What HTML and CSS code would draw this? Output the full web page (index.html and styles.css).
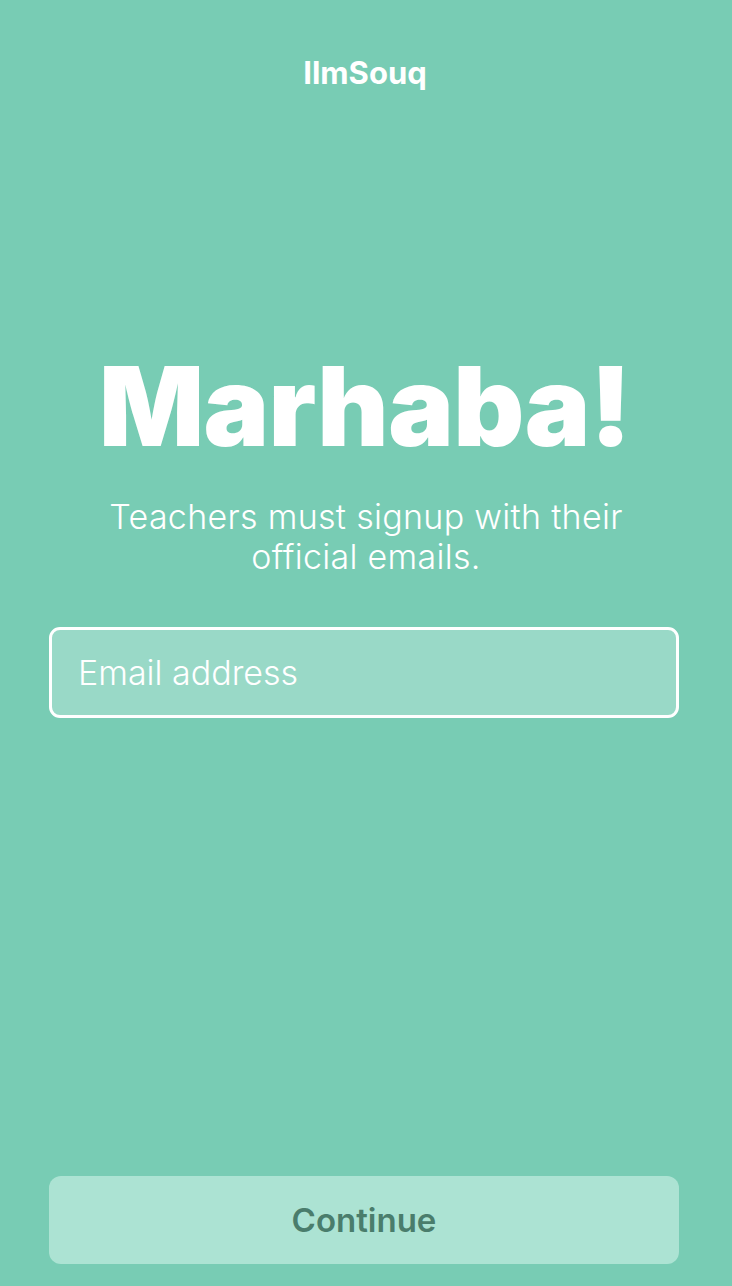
FILE: index.html
```html
<!DOCTYPE html>
<html lang="en">
<head>
<meta charset="utf-8">
<title>IlmSouq</title>
<link rel="stylesheet" href="styles.css">
</head>
<body>
<div class="screen">
  <header class="topbar">IlmSouq</header>
  <main class="content">
    <h1 class="hero">Marhaba!</h1>
    <p class="lead">Teachers must signup with their official emails.</p>
    <div class="field"><span class="placeholder">Email address</span></div>
  </main>
  <footer class="actions">
    <button class="continue" type="button">Continue</button>
  </footer>
</div>
</body>
</html>
```

FILE: styles.css
```css
* { box-sizing: border-box; }
html, body { margin: 0; padding: 0; }
body {
  background: #78ccb4;
  font-family: Inter, Roboto, "Liberation Sans", sans-serif;
  color: #ffffff;
}
.screen {
  height: 1286px;
  display: flex;
  flex-direction: column;
  padding: 0 53px 22px 49px;
}
.topbar {
  font-weight: 700;
  font-size: 31px;
  text-align: center;
  padding-top: 56px;
  line-height: 34px;
  margin-left: 2px;
}
.content {
  flex: 1;
  display: flex;
  flex-direction: column;
  align-items: center;
  padding-top: 251px;
}
.hero {
  margin: 0;
  font-weight: 900;
  font-size: 110px;
  line-height: 130px;
  letter-spacing: -0.6px;
  text-align: center;
  margin-left: 2px;
}
.lead {
  margin: 26px 0 0 4px;
  max-width: 570px;
  font-size: 34px;
  line-height: 40px;
  font-weight: 350;
  letter-spacing: 0.3px;
  text-align: center;
}
.field {
  align-self: stretch;
  margin-top: 50px;
  height: 91px;
  border: 3px solid #ffffff;
  border-radius: 11px;
  background: #99d9c7;
  display: flex;
  align-items: center;
  padding-left: 26px;
}
.placeholder {
  font-size: 34px;
  font-weight: 330;
  color: #ffffff;
}
.actions { display: flex; }
.continue {
  flex: 1;
  height: 88px;
  border: none;
  border-radius: 12px;
  background: #ace3d3;
  color: #4a7d6c;
  font-family: Inter, Roboto, sans-serif;
  font-weight: 600;
  font-size: 33px;
  padding: 0;
}
```
